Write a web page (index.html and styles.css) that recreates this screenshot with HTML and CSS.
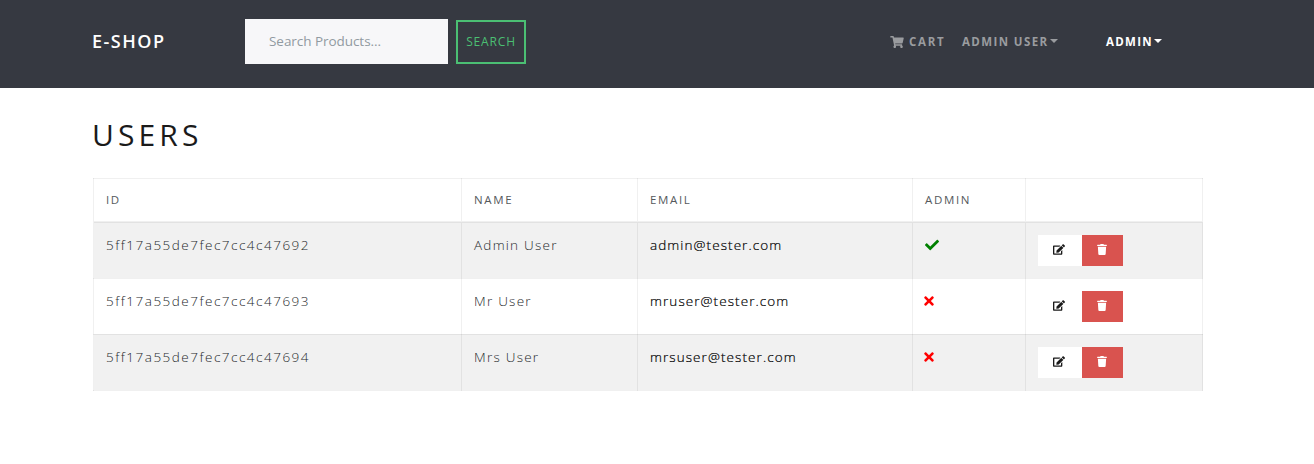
FILE: index.html
```html
<!DOCTYPE html>
<html lang="en">
<head>
<meta charset="utf-8">
<title>E-Shop</title>
<link rel="stylesheet" href="styles.css">
</head>
<body>
<svg class="defs" aria-hidden="true">
  <symbol id="check" viewBox="0 0 512 512"><path d="M173.898 439.404l-166.4-166.4c-9.997-9.997-9.997-26.206 0-36.204l36.203-36.204c9.997-9.998 26.207-9.998 36.204 0L192 312.69 432.095 72.596c9.997-9.997 26.207-9.997 36.204 0l36.203 36.204c9.997 9.997 9.997 26.206 0 36.204l-294.4 294.401c-9.998 9.997-26.207 9.997-36.204-.001z"/></symbol>
  <symbol id="times" viewBox="0 0 352 512"><path d="M242.72 256l100.07-100.07c12.28-12.28 12.28-32.19 0-44.48l-22.24-22.24c-12.28-12.28-32.19-12.28-44.48 0L176 189.28 75.93 89.21c-12.28-12.28-32.19-12.28-44.48 0L9.21 111.45c-12.28 12.28-12.28 32.19 0 44.48L109.28 256 9.21 356.07c-12.28 12.28-12.28 32.19 0 44.48l22.24 22.24c12.28 12.28 32.2 12.28 44.48 0L176 322.72l100.07 100.07c12.28 12.28 32.2 12.28 44.48 0l22.24-22.24c12.28-12.28 12.28-32.19 0-44.48L242.72 256z"/></symbol>
  <symbol id="cart" viewBox="0 0 576 512"><path d="M528.12 301.319l47.273-208C578.806 78.301 567.391 64 551.99 64H159.208l-9.166-44.81C147.758 8.021 137.93 0 126.529 0H24C10.745 0 0 10.745 0 24v16c0 13.255 10.745 24 24 24h69.883l70.248 343.435C147.325 417.1 136 435.222 136 456c0 30.928 25.072 56 56 56s56-25.072 56-56c0-15.674-6.447-29.835-16.824-40h209.647C430.447 426.165 424 440.326 424 456c0 30.928 25.072 56 56 56s56-25.072 56-56c0-22.172-12.888-41.332-31.579-50.405l5.517-24.276c3.413-15.018-8.002-29.319-23.403-29.319H218.117l-6.545-32h293.145c11.206 0 20.92-7.754 23.403-18.681z"/></symbol>
  <symbol id="edit" viewBox="0 0 576 512"><path d="M402.600 83.200l90.200 90.200c3.800 3.800 3.800 10 0 13.800L274.400 405.600l-92.800 10.300c-12.400 1.400-22.900-9.100-21.500-21.500l10.300-92.800L388.800 83.200c3.800-3.800 10-3.800 13.800 0zm162-22.900l-48.800-48.800c-15.200-15.200-39.900-15.200-55.200 0l-35.400 35.400c-3.800 3.800-3.800 10 0 13.800l90.200 90.200c3.800 3.800 10 3.800 13.800 0l35.400-35.400c15.200-15.300 15.200-40 0-55.200zM384 346.200V448H64V128h229.800c3.200 0 6.200-1.300 8.500-3.500l40-40c7.600-7.600 2.200-20.500-8.500-20.500H48C21.500 64 0 85.500 0 112v352c0 26.500 21.500 48 48 48h352c26.500 0 48-21.500 48-48V306.200c0-10.700-12.900-16-20.500-8.500l-40 40c-2.200 2.300-3.500 5.300-3.500 8.500z"/></symbol>
  <symbol id="trash" viewBox="0 0 448 512"><path d="M432 32H312l-9.400-18.700A24 24 0 0 0 281.100 0H166.800a23.720 23.720 0 0 0-21.400 13.300L136 32H16A16 16 0 0 0 0 48v32a16 16 0 0 0 16 16h416a16 16 0 0 0 16-16V48a16 16 0 0 0-16-16zM53.200 467a48 48 0 0 0 47.900 45h245.800a48 48 0 0 0 47.900-45L416 128H32z"/></symbol>
</svg>
<header class="navbar">
  <div class="container bar">
    <a class="brand">E-SHOP</a>
    <form class="search">
      <input class="search-input" type="text" placeholder="Search Products...">
      <button class="search-button" type="button"><span>SEARCH</span></button>
    </form>
    <nav class="links">
      <a class="link cart"><svg class="cart-icon"><use href="#cart"/></svg><span>CART</span></a>
      <a class="link user"><span>ADMIN USER</span><i class="caret"></i></a>
      <a class="link admin"><span>ADMIN</span><i class="caret"></i></a>
    </nav>
  </div>
</header>
<main class="container">
  <h1 class="title"><span>USERS</span></h1>
  <table class="table">
    <colgroup><col class="c-id"><col class="c-name"><col class="c-email"><col class="c-admin"><col class="c-actions"></colgroup>
    <thead><tr><th><span>ID</span></th><th><span>NAME</span></th><th><span>EMAIL</span></th><th><span>ADMIN</span></th><th></th></tr></thead>
    <tbody>
      <tr><td><span class="id">5ff17a55de7fec7cc4c47692</span></td><td><span>Admin User</span></td><td><a class="mail">admin@tester.com</a></td><td><svg class="mark yes"><use href="#check"/></svg></td><td><div class="actions"><a class="btn edit"><svg class="edit-icon"><use href="#edit"/></svg></a><a class="btn delete"><svg class="trash-icon"><use href="#trash"/></svg></a></div></td></tr>
      <tr><td><span class="id">5ff17a55de7fec7cc4c47693</span></td><td><span>Mr User</span></td><td><a class="mail">mruser@tester.com</a></td><td><svg class="mark no"><use href="#times"/></svg></td><td><div class="actions"><a class="btn edit"><svg class="edit-icon"><use href="#edit"/></svg></a><a class="btn delete"><svg class="trash-icon"><use href="#trash"/></svg></a></div></td></tr>
      <tr><td><span class="id">5ff17a55de7fec7cc4c47694</span></td><td><span>Mrs User</span></td><td><a class="mail">mrsuser@tester.com</a></td><td><svg class="mark no"><use href="#times"/></svg></td><td><div class="actions"><a class="btn edit"><svg class="edit-icon"><use href="#edit"/></svg></a><a class="btn delete"><svg class="trash-icon"><use href="#trash"/></svg></a></div></td></tr>
    </tbody>
  </table>
</main>
</body>
</html>
```
FILE: styles.css
```css
* { box-sizing: border-box; }
body { margin: 0; background: #fff; color: #55595c; font-family: "Open Sans", sans-serif; font-size: 14px; }
svg { fill: currentColor; display: block; }
.defs { display: none; }
.container { width: 1110px; margin: 0 0 0 93px; }
.navbar { height: 88px; background: #363941; }
.bar { display: flex; align-items: flex-start; padding-top: 19px; }
.brand { width: 152px; margin-left: -1px; margin-right: 1px; color: #fff; font-size: 18px; font-weight: 600; line-height: 45px; letter-spacing: 1.5px; }
.search { display: flex; align-items: flex-end; gap: 8px; height: 45px; }
.search-input { width: 203px; height: 45px; border: 0; border-radius: 0; padding: 0 24px 1px; background: #f7f7f9; font: 13.5px "Open Sans", sans-serif; letter-spacing: -0.05px; }
.search-input::placeholder { color: #919aa1; opacity: 1; }
.search-button { width: 70px; height: 44px; padding: 0 0 1px; border: 2px solid #4bbf73; background: transparent; color: #4bbf73; font: 12px "Open Sans", sans-serif; letter-spacing: 0.85px; }
.links { display: flex; margin-left: 364px; height: 45px; align-items: center; font-size: 11.5px; font-weight: 700; letter-spacing: 1.7px; color: #9a9c9f; white-space: nowrap; }
.link { display: flex; align-items: center; }
.cart { width: 72px; }
.cart-icon { width: 14px; height: 12px; margin-right: 5px; }
.user { width: 144px; }
.user span { letter-spacing: 1.4px; }
.admin { color: #fff; }
.admin span { letter-spacing: 1.3px; }
.caret { border: 4px solid transparent; border-top-color: currentColor; border-bottom: 0; margin: -2px 0 0 1px; }
.title { margin: 0; padding-top: 23px; height: 90px; margin-left: -1px; color: #1a1a1a; font-size: 30px; font-weight: 400; line-height: 48px; letter-spacing: 4.1px; }
.table { width: 1110px; table-layout: fixed; border-collapse: collapse; }
.c-id { width: 368px; }
.c-name { width: 176px; }
.c-email { width: 275px; }
.c-admin { width: 113px; }
.table th, .table td { border: 1px solid rgba(0,0,0,.06); padding: 12px; text-align: left; vertical-align: top; }
.table th { height: 43px; border-bottom-width: 2px; padding-bottom: 10px; font-size: 11.5px; font-weight: 400; line-height: 18px; letter-spacing: 1.65px; }
.table td { height: 56px; line-height: 21px; font-size: 13.5px; letter-spacing: 1.25px; font-weight: 300; color: #26292c; }
.table .id { letter-spacing: 1.5px; }
tbody tr:nth-child(odd) { background: rgba(0,0,0,.055); }
.mail { color: #000; letter-spacing: 1.08px; -webkit-text-stroke: 0.2px #000; }
.mark { height: 14px; margin-top: 3px; }
.yes { width: 14px; color: green; }
.no { width: 10px; margin-left: -1px; color: red; }
.actions { display: flex; height: 31px; }
.btn { display: flex; align-items: center; justify-content: center; height: 31px; }
.table .edit { width: 44px; padding-right: 2px; background: #fff; color: #1a1a1a; }
.table .delete { width: 41px; padding-right: 1px; background: #d9534f; color: #fff; }
.edit-icon { width: 12px; height: 11px; margin-bottom: 2px; }
.trash-icon { width: 10px; height: 11px; margin-bottom: 2px; }
.table .yes { color: green; }
.table .no { color: red; }
```
